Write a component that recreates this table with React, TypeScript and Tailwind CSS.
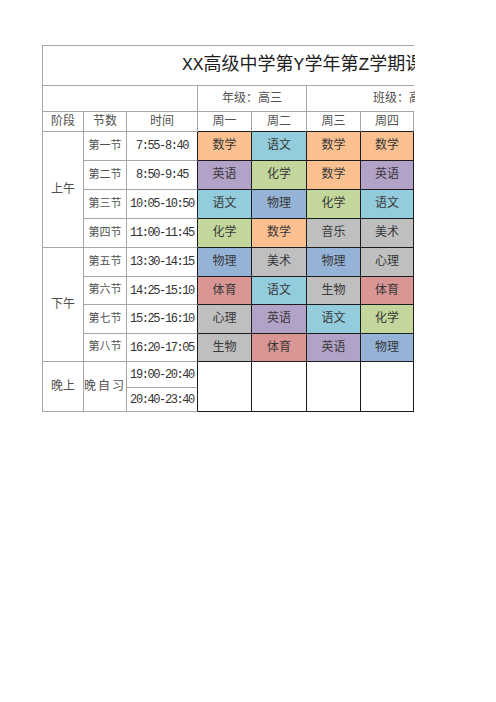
const subjectBg: Record<string, string> = {
  数学: "bg-[#fac090]",
  语文: "bg-[#93cddd]",
  英语: "bg-[#b3a2c7]",
  化学: "bg-[#c3d69b]",
  物理: "bg-[#95b3d7]",
  音乐: "bg-[#bfbfbf]",
  美术: "bg-[#bfbfbf]",
  生物: "bg-[#bfbfbf]",
  心理: "bg-[#bfbfbf]",
  体育: "bg-[#da9694]",
};

const morning = [
  ["第一节", "7:55-8:40", ["数学", "语文", "数学", "数学"]],
  ["第二节", "8:50-9:45", ["英语", "化学", "数学", "英语"]],
  ["第三节", "10:05-10:50", ["语文", "物理", "化学", "语文"]],
  ["第四节", "11:00-11:45", ["化学", "数学", "音乐", "美术"]],
] as const;

const afternoon = [
  ["第五节", "13:30-14:15", ["物理", "美术", "物理", "心理"]],
  ["第六节", "14:25-15:10", ["体育", "语文", "生物", "体育"]],
  ["第七节", "15:25-16:10", ["心理", "英语", "语文", "化学"]],
  ["第八节", "16:20-17:05", ["生物", "体育", "英语", "物理"]],
] as const;

const cell = "flex items-center justify-center border-r border-b border-[#a6a6a6] whitespace-nowrap";
const dark = "flex items-center justify-center border-r border-b border-[#1c1c1c] whitespace-nowrap";
const timeCls =
  "flex items-center justify-center border-b border-[#a6a6a6] border-r border-r-[#1c1c1c] text-[12px] tracking-[-1.4px] text-[#333333] whitespace-nowrap";

function Block({ label, rows }: { label: string; rows: typeof morning | typeof afternoon }) {
  return (
    <>
      {rows.map(([name, time, subs], i) => (
        <Row key={name} first={i === 0} label={label} name={name} time={time} subs={subs} />
      ))}
    </>
  );
}

function Row({
  first,
  label,
  name,
  time,
  subs,
}: {
  first: boolean;
  label: string;
  name: string;
  time: string;
  subs: readonly string[];
}) {
  return (
    <>
      {first && <div className={`${cell} row-span-4 text-[12px] text-[#505050]`}>{label}</div>}
      <div className={`${cell} text-[11px] text-[#505050]`}>{name}</div>
      <div className={timeCls}>{time}</div>
      {subs.map((s, i) => (
        <div key={i} className={`${dark} ${subjectBg[s]} text-[12px] text-[#383838]`}>
          {s}
        </div>
      ))}
    </>
  );
}

export default function App() {
  return (
    <div className="h-[702px] w-[496px] bg-white">
      <div className="w-[415px] overflow-hidden pt-[45px] pl-[42px]">
        <div
          className="grid w-[372px] grid-cols-[41px_43px_71px_54px_55px_54px_53px] grid-rows-[40px_26px_20px_29px_29px_29px_29px_29px_28px_29px_28px_26px_24px] border-l border-t border-[#a6a6a6]"
          style={{ fontFamily: '"Liberation Mono", "Noto Sans CJK SC", monospace' }}
        >
          {/* title */}
          <div className="col-span-7 flex items-center border-b border-[#a6a6a6] pl-[139px] text-[18px] whitespace-nowrap text-[#1e1e1e]">
            XX高级中学第Y学年第Z学期课程表
          </div>
          {/* grade row */}
          <div className={`${cell} col-span-3`} />
          <div className={`${cell} col-span-2 text-[12px] text-[#505050]`}>年级：高三</div>
          <div className="col-span-2 flex items-center border-b border-[#a6a6a6] pl-[66px] text-[12px] whitespace-nowrap text-[#505050]">
            班级：高三(1)班
          </div>
          {/* header */}
          <div className={`${cell} text-[12px] text-[#505050]`}>阶段</div>
          <div className={`${cell} text-[12px] text-[#505050]`}>节数</div>
          <div className={`${cell} text-[12px] text-[#505050]`}>时间</div>
          {["周一", "周二", "周三", "周四"].map((d) => (
            <div key={d} className={`${cell} border-b-[#1c1c1c] text-[12px] text-[#505050]`}>
              {d}
            </div>
          ))}
          <Block label="上午" rows={morning} />
          <Block label="下午" rows={afternoon} />
          {/* evening */}
          <div className={`${cell} row-span-2 text-[12px] text-[#505050]`}>晚上</div>
          <div className={`${cell} row-span-2 text-[12px] tracking-[2px] text-[#505050]`}>晚自习</div>
          <div className={timeCls}>19:00-20:40</div>
          <div className={`${dark} row-span-2`} />
          <div className={`${dark} row-span-2`} />
          <div className={`${dark} row-span-2`} />
          <div className={`${dark} row-span-2`} />
          <div className={timeCls}>20:40-23:40</div>
        </div>
      </div>
    </div>
  );
}
